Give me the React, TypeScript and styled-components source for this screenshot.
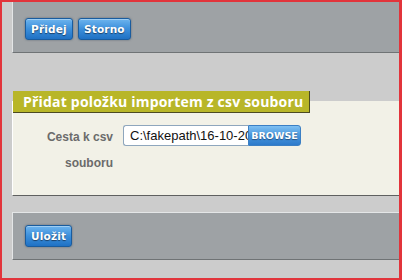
import styled, { createGlobalStyle } from "styled-components";

const GlobalStyle = createGlobalStyle`
  html, body {
    margin: 0;
    padding: 0;
    background: #cccccc;
  }
`;

const Frame = styled.div`
  box-sizing: border-box;
  width: 402px;
  height: 280px;
  border-style: solid;
  border-color: #e2343b;
  border-width: 2px 3px 2px 2px;
  background: #cccccc;
  padding-left: 10px;
  font-family: "Liberation Sans", Arial, sans-serif;
  overflow: hidden;
`;

const Toolbar = styled.div<{ $top?: boolean }>`
  box-sizing: border-box;
  height: ${(p) => (p.$top ? "51px" : "48px")};
  background: #9ea2a5;
  border-left: 1px solid #e4e6e7;
  border-top: ${(p) => (p.$top ? "none" : "1px solid #e4e6e7")};
  border-bottom: 1px solid #6f7375;
  display: flex;
  align-items: center;
  gap: 5px;
  padding: ${(p) => (p.$top ? "3px" : "0")} 0 0 12px;
  margin-top: ${(p) => (p.$top ? "0" : "16px")};
`;

const Button = styled.button`
  box-sizing: border-box;
  height: 22px;
  padding: 0 5px;
  border: 1px solid #1a5c9e;
  border-radius: 3px;
  background: linear-gradient(#6db4ee 0%, #3c8fdb 50%, #1f71c4 100%);
  box-shadow: 0 0 2px rgba(40, 60, 80, 0.6), inset 0 1px 0 rgba(255, 255, 255, 0.35);
  color: #ffffff;
  font-family: "DejaVu Sans", Verdana, sans-serif;
  font-weight: bold;
  font-size: 10.5px;
  letter-spacing: 0.2px;
  text-shadow: 0 1px 1px #1b3f66;
  cursor: pointer;
`;

const Panel = styled.div`
  display: flow-root;
  margin-top: 48px;
  height: 95px;
  background: #f2f1e7;
  border-left: 1px solid #ffffff;
  border-bottom: 1px solid #5f6060;
  box-sizing: border-box;
`;

const Tab = styled.div`
  box-sizing: border-box;
  width: fit-content;
  margin-top: -10px;
  height: 22px;
  padding: 0 6px 0 10px;
  background: #b8b628;
  border-right: 1px solid #4b4a22;
  border-bottom: 1px solid #4b4a22;
  color: #ffffff;
  font-family: "Open Sans", "DejaVu Sans", sans-serif;
  font-weight: bold;
  font-size: 14px;
  letter-spacing: 0.2px;
  line-height: 21px;
`;

const Row = styled.div`
  display: flex;
  align-items: flex-start;
  gap: 10px;
  margin-top: 12px;
`;

const Label = styled.label`
  width: 80px;
  margin-left: 20px;
  margin-top: -1px;
  text-align: right;
  color: #6b6b6b;
  font-weight: bold;
  font-size: 12px;
  line-height: 26px;
`;

const FileBox = styled.div`
  display: flex;
  height: 21px;
`;

const PathInput = styled.input`
  box-sizing: border-box;
  width: 125px;
  height: 21px;
  margin: 0;
  border: 1px solid #8ea6bd;
  border-right: none;
  border-radius: 3px 0 0 3px;
  background: #ffffff;
  padding: 0 0 0 6px;
  font-family: "Liberation Sans", Arial, sans-serif;
  font-size: 13px;
  color: #111111;
  outline: none;
`;

const BrowseButton = styled.div`
  box-sizing: border-box;
  width: 53px;
  height: 21px;
  border: 1px solid #3b7fc4;
  border-radius: 0 3px 3px 0;
  background: linear-gradient(#7fc0f2 0%, #4896dd 50%, #2d7acb 100%);
  color: #ffffff;
  font-family: "DejaVu Sans", Verdana, sans-serif;
  font-weight: bold;
  font-size: 9.5px;
  line-height: 19px;
  text-align: center;
  text-shadow: 0 1px 1px #24507f;
`;

export default function App() {
  return (
    <>
      <GlobalStyle />
      <Frame>
        <Toolbar $top>
          <Button>Přidej</Button>
          <Button>Storno</Button>
        </Toolbar>
        <Panel>
          <Tab>Přidat položku importem z csv souboru</Tab>
          <Row>
            <Label>Cesta k csv souboru</Label>
            <FileBox>
              <PathInput readOnly value="C:\fakepath\16-10-2016.csv" />
              <BrowseButton>BROWSE</BrowseButton>
            </FileBox>
          </Row>
        </Panel>
        <Toolbar>
          <Button>Uložit</Button>
        </Toolbar>
      </Frame>
    </>
  );
}
